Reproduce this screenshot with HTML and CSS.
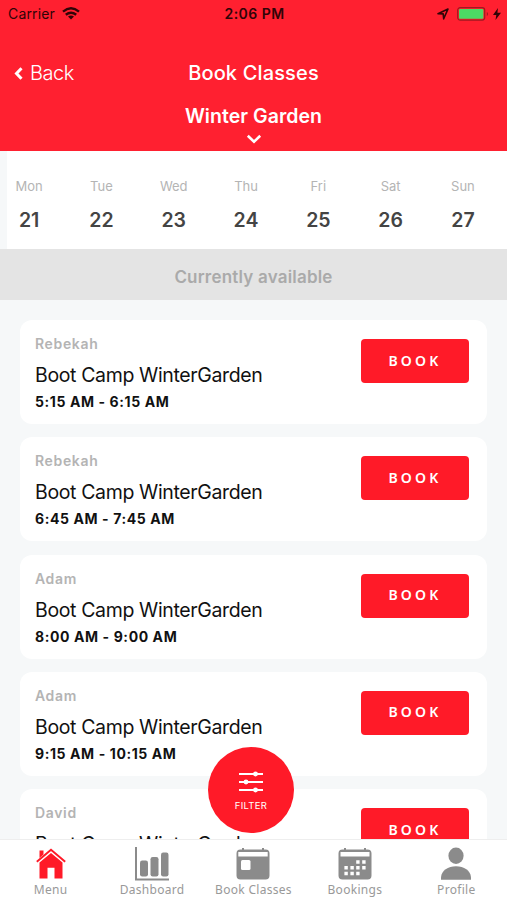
FILE: index.html
```html
<!DOCTYPE html>
<html lang="en">
<head>
  <meta charset="UTF-8">
  <meta name="viewport" content="width=device-width, initial-scale=1.0">
  <title>Book Classes</title>
  <link rel="stylesheet" href="styles.css">
</head>
<body>
  <div class="app">
    <header class="header">
      <div class="status-bar">
        <div class="status-left">
          <span class="carrier">Carrier</span>
          <svg class="wifi" width="18" height="13" viewBox="0 0 18 13">
            <path d="M1 4.6Q9-2 17 4.6M3.8 7.8Q9 3.6 14.2 7.8" fill="none" stroke="currentColor" stroke-width="2.4"/>
            <path d="M6 9.6Q9 7.3 12 9.6L9 12.6z" fill="currentColor"/>
          </svg>
        </div>
        <span class="clock">2:06 PM</span>
        <div class="status-right">
          <svg width="12" height="12" viewBox="0 0 12 12"><path d="M1 5.7L11 1 6.7 10.8 6.2 5.9z" fill="none" stroke="currentColor" stroke-width="1.6" stroke-linejoin="round"/></svg>
          <svg class="battery" width="32" height="14" viewBox="0 0 32 14">
            <rect x=".7" y=".7" width="27" height="12.4" rx="2.5" fill="none" stroke="#a01820" stroke-width="1.2"/>
            <rect x="2" y="2" width="24.4" height="9.8" rx="1" fill="#4cd964"/>
            <path d="M29.8 5v4q1.3-.6 1.3-2t-1.3-2" fill="#a01820"/>
          </svg>
          <svg class="bolt" width="8" height="12" viewBox="0 0 8 12"><path d="M5 0L0 7h3.3L2.5 12 8 4.8H4.4z" fill="currentColor"/></svg>
        </div>
      </div>
      <div class="nav-bar">
        <a class="back">
          <svg width="9" height="13" viewBox="0 0 9 13"><path d="M7.5 1.2L2.5 6.5l5 5.3" fill="none" stroke="currentColor" stroke-width="3"/></svg>
          <span>Back</span>
        </a>
        <h1 class="title">Book Classes</h1>
      </div>
      <div class="location">
        <span>Winter Garden</span>
        <svg width="16" height="10" viewBox="0 0 16 10"><path d="M1.8 1.8L8 7.8l6.2-6" fill="none" stroke="currentColor" stroke-width="2.6"/></svg>
      </div>
    </header>

    <section class="days">
      <div class="day"><span>Mon</span><strong>21</strong></div>
      <div class="day"><span>Tue</span><strong>22</strong></div>
      <div class="day"><span>Wed</span><strong>23</strong></div>
      <div class="day"><span>Thu</span><strong>24</strong></div>
      <div class="day"><span>Fri</span><strong>25</strong></div>
      <div class="day"><span>Sat</span><strong>26</strong></div>
      <div class="day"><span>Sun</span><strong>27</strong></div>
    </section>
    <div class="banner">Currently available</div>

    <main class="list">
      <article class="card">
        <div class="info">
          <p class="coach">Rebekah</p>
          <h2 class="name">Boot Camp WinterGarden</h2>
          <p class="time">5:15 AM - 6:15 AM</p>
        </div>
        <button class="book">BOOK</button>
      </article>
      <article class="card">
        <div class="info">
          <p class="coach">Rebekah</p>
          <h2 class="name">Boot Camp WinterGarden</h2>
          <p class="time">6:45 AM - 7:45 AM</p>
        </div>
        <button class="book">BOOK</button>
      </article>
      <article class="card">
        <div class="info">
          <p class="coach">Adam</p>
          <h2 class="name">Boot Camp WinterGarden</h2>
          <p class="time">8:00 AM - 9:00 AM</p>
        </div>
        <button class="book">BOOK</button>
      </article>
      <article class="card">
        <div class="info">
          <p class="coach">Adam</p>
          <h2 class="name">Boot Camp WinterGarden</h2>
          <p class="time">9:15 AM - 10:15 AM</p>
        </div>
        <button class="book">BOOK</button>
      </article>
      <article class="card">
        <div class="info">
          <p class="coach">David</p>
          <h2 class="name">Boot Camp WinterGarden</h2>
        </div>
        <button class="book">BOOK</button>
      </article>
    </main>

    <button class="filter">
      <svg width="26" height="22" viewBox="0 0 26 22">
        <path d="M1 3h24M1 11h24M1 19h24" stroke="currentColor" stroke-width="2"/>
        <g fill="currentColor"><circle cx="17.5" cy="3" r="2.4"/><circle cx="8" cy="11" r="2.4"/><circle cx="17.5" cy="19" r="2.4"/></g>
      </svg>
      <span>FILTER</span>
    </button>

    <nav class="tabs">
      <a class="tab active">
        <svg width="34" height="34" viewBox="0 0 34 34" fill="currentColor">
          <path d="M5.5 3.5h4v4l-4 3.5z"/>
          <path d="M2.8 14.7L17 2.8l14.2 11.9" fill="none" stroke="currentColor" stroke-width="2"/>
          <path d="M5.5 15.5L17 6l11.5 9.5v16h-8V20.7h-7v10.8h-8z"/>
        </svg>
        <span>Menu</span>
      </a>
      <a class="tab">
        <svg width="34" height="34" viewBox="0 0 34 34" fill="currentColor">
          <path d="M1 0v32.5h33" fill="none" stroke="currentColor" stroke-width="2"/>
          <rect x="5" y="13.5" width="8" height="16" rx="2.2"/>
          <rect x="15.5" y="10" width="8" height="19.5" rx="2.2"/>
          <rect x="26" y="5.5" width="7.5" height="24" rx="2.2"/>
        </svg>
        <span>Dashboard</span>
      </a>
      <a class="tab">
        <svg width="34" height="34" viewBox="0 0 34 34" fill="currentColor">
          <path fill-rule="evenodd" d="M4.5 2.5h25a4 4 0 0 1 4 4v22a4 4 0 0 1-4 4h-25a4 4 0 0 1-4-4v-22a4 4 0 0 1 4-4zM2.3 5v4.5h29.4V5z"/>
          <path d="M7 1v3M27 1v3" stroke="currentColor" stroke-width="2"/>
          <rect x="5" y="13" width="9.5" height="10" rx="1.5" fill="#fff"/>
        </svg>
        <span>Book Classes</span>
      </a>
      <a class="tab">
        <svg width="34" height="34" viewBox="0 0 34 34" fill="currentColor">
          <path fill-rule="evenodd" d="M4.5 2.5h25a4 4 0 0 1 4 4v22a4 4 0 0 1-4 4h-25a4 4 0 0 1-4-4v-22a4 4 0 0 1 4-4zM2.5 5v4.5h29V5z"/>
          <path d="M7 1v3M27 1v3" stroke="currentColor" stroke-width="2"/>
          <path d="M18.2 15h3.4M24.2 15h3.4M6.4 20.8h3.4M12.4 20.8h3.4M18.2 20.8h3.4M24.2 20.8h3.4M6.4 26.5h3.4M12.4 26.5h3.4M18.2 26.5h3.4" stroke="#fff" stroke-width="3.4"/>
        </svg>
        <span>Bookings</span>
      </a>
      <a class="tab">
        <svg width="34" height="34" viewBox="0 0 34 34" fill="currentColor">
          <ellipse cx="17" cy="8.8" rx="7.6" ry="8.2"/>
          <path d="M2 32.8v-2.5C2.5 23.5 9 19.3 17 19.3s14.5 4.2 15 11v2.5z"/>
        </svg>
        <span>Profile</span>
      </a>
    </nav>
  </div>
</body>
</html>
```
FILE: styles.css
```css
* { box-sizing: border-box; }
body { margin: 0; font-family: Inter, "Liberation Sans", sans-serif; }
h1, h2, p { margin: 0; font-weight: normal; }
svg { display: block; flex: none; }
button { border: none; padding: 0; font-family: inherit; color: #fff; background: #ff1a28; }

.app { position: relative; display: flex; flex-direction: column; height: 900px; overflow: hidden; background: #f6f8f9; }

.header { height: 151px; flex: none; background: #ff2030; color: #fff; }
.status-bar { display: grid; grid-template-columns: 1fr auto 1fr; align-items: center; height: 28px; padding: 0 6px 0 8px; color: #300407; font-size: 14px; line-height: 28px; }
.status-left, .status-right { display: flex; align-items: center; }
.status-left { gap: 7px; }
.carrier { letter-spacing: 0.15px; }
.wifi { margin-top: -1px; }
.status-right { justify-content: flex-end; gap: 8px; }
.battery { margin-top: -1px; }
.bolt { margin-left: -4px; }
.clock { font-weight: 600; letter-spacing: 0.45px; }

.nav-bar { display: grid; grid-template-columns: 1fr auto 1fr; align-items: center; height: 40px; margin-top: 25px; padding: 0 14px; }
.back { display: flex; align-items: center; gap: 7px; font-size: 20px; font-weight: 300; letter-spacing: -0.5px; }
.title { font-size: 20px; font-weight: 500; letter-spacing: 0.15px; }

.location { display: flex; flex-direction: column; align-items: center; margin-top: 11px; font-size: 19.5px; font-weight: 600; line-height: 24px; letter-spacing: 0.05px; }
.location svg { margin-top: 6px; }

.days { display: grid; grid-template-columns: repeat(7, 72.3px); height: 98px; flex: none; padding-top: 27px; background: #fff; border-left: 7px solid #f6f8f9; }
.day { display: flex; flex-direction: column; align-items: center; margin-left: -28px; }
.day span { font-size: 13px; line-height: 17px; color: #b4b4b4; }
.day strong { margin-top: 12px; font-size: 19.5px; line-height: 26px; font-weight: 600; color: #444; }
.banner { height: 51px; flex: none; background: #e4e4e4; color: #aaa; font-size: 17px; font-weight: 600; line-height: 56px; text-align: center; letter-spacing: 0.2px; }

.list { display: flex; flex-direction: column; flex: 1; min-height: 0; gap: 13.3px; padding: 20px 20px 0; overflow: hidden; }
.card { display: flex; justify-content: space-between; height: 104px; flex: none; padding: 0 18px 0 15px; background: #fff; border-radius: 12px; }
.info { padding-top: 15px; }
.coach { font-size: 14px; line-height: 18px; font-weight: 600; color: #b4b4b4; letter-spacing: 0.65px; }
.name { margin-top: 9px; font-size: 19.5px; line-height: 26px; color: #111; letter-spacing: -0.36px; }
.time { margin-top: 5px; font-size: 14px; line-height: 18px; font-weight: 700; color: #111; letter-spacing: 0.6px; }
.book { width: 108px; height: 44px; margin-top: 19px; padding-bottom: 2px; border-radius: 4px; font-family: "Noto Sans", sans-serif; font-size: 14px; font-weight: 600; letter-spacing: 3.2px; }

/* floats above the list */
.filter { position: absolute; left: 208px; top: 747px; display: flex; flex-direction: column; align-items: center; width: 86px; height: 86px; padding-top: 24px; border-radius: 50%; font-size: 9.5px; }
.filter span { margin-top: 7px; line-height: 12px; letter-spacing: 0.3px; }

.tabs { display: grid; grid-template-columns: repeat(5, 1fr); height: 61px; flex: none; padding-top: 7px; background: #fff; border-top: 1px solid #eee; }
.tab { display: flex; flex-direction: column; align-items: center; color: #8b8b8b; font-family: "Noto Sans", sans-serif; font-size: 12px; line-height: 16px; white-space: nowrap; letter-spacing: 0.3px; }
.tab span { margin-top: 1px; color: #999; }
.tab.active svg { color: #ff1a28; }
```
